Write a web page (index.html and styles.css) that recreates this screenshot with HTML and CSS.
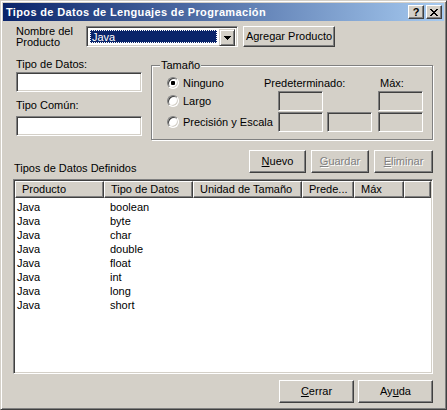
FILE: index.html
```html
<!DOCTYPE html>
<html>
<head>
<meta charset="utf-8">
<title>Tipos de Datos</title>
<link rel="stylesheet" href="styles.css">
</head>
<body>
<div class="window">
  <div class="titlebar">
    <span class="title">Tipos de Datos de Lenguajes de Programación</span>
    <div class="tbtns">
      <span class="tbtn help">?</span>
      <span class="tbtn close"><svg width="8" height="7" viewBox="0 0 8 7"><path d="M0 0h2v1H0zM6 0h2v1H6zM1 1h2v1H1zM5 1h2v1H5zM2 2h4v1H2zM3 3h2v1H3zM2 4h4v1H2zM1 5h2v1H1zM5 5h2v1H5zM0 6h2v1H0zM6 6h2v1H6z" fill="#000"/></svg></span>
    </div>
  </div>
  <div class="content">
    <div class="row1">
      <div class="lbl-prod">Nombre del<br>Producto</div>
      <div class="combo">
        <div class="combo-sel"><span>Java</span></div>
        <div class="combo-btn"><svg width="7" height="4" viewBox="0 0 7 4"><path d="M0 0h7v1H0zM1 1h5v1H1zM2 2h3v1H2zM3 3h1v1H3z" fill="#000"/></svg></div>
      </div>
      <button class="btn btn-add">Agregar Producto</button>
    </div>

    <div class="row2">
      <div class="leftcol">
        <div class="lbl">Tipo de Datos:</div>
        <div class="field f1"></div>
        <div class="lbl l2">Tipo Común:</div>
        <div class="field f2"></div>
      </div>
      <div class="group">
        <span class="legend">Tamaño</span>
        <div class="grow g0">
          <div class="radio-item r-short"><span class="radio checked"></span>Ninguno</div>
          <span class="cap-pred">Predeterminado:</span>
          <span class="cap-max">Máx:</span>
        </div>
        <div class="grow g1">
          <div class="radio-item"><span class="radio"></span>Largo</div>
          <div class="field dis"></div>
          <div class="spacer"></div>
          <div class="field dis"></div>
        </div>
        <div class="grow g2">
          <div class="radio-item"><span class="radio"></span>Precisión y Escala</div>
          <div class="field dis"></div>
          <div class="field dis gap4"></div>
          <div class="field dis gap6"></div>
        </div>
      </div>
    </div>

    <div class="row3">
      <div class="lbl-list">Tipos de Datos Definidos</div>
      <div class="btns">
        <button class="btn b-nuevo"><u>N</u>uevo</button>
        <button class="btn b-guardar disabled"><u>G</u>uardar</button>
        <button class="btn b-eliminar disabled"><u>E</u>liminar</button>
      </div>
    </div>

    <div class="list">
      <div class="lhead">
        <div class="hc c1">Producto</div>
        <div class="hc c2">Tipo de Datos</div>
        <div class="hc c3">Unidad de Tamaño</div>
        <div class="hc c4">Prede...</div>
        <div class="hc c5">Máx</div>
        <div class="hc cf"></div>
      </div>
      <div class="lrows">
        <div class="lrow"><span class="d1">Java</span><span class="d2">boolean</span></div>
        <div class="lrow"><span class="d1">Java</span><span class="d2">byte</span></div>
        <div class="lrow"><span class="d1">Java</span><span class="d2">char</span></div>
        <div class="lrow"><span class="d1">Java</span><span class="d2">double</span></div>
        <div class="lrow"><span class="d1">Java</span><span class="d2">float</span></div>
        <div class="lrow"><span class="d1">Java</span><span class="d2">int</span></div>
        <div class="lrow"><span class="d1">Java</span><span class="d2">long</span></div>
        <div class="lrow"><span class="d1">Java</span><span class="d2">short</span></div>
      </div>
    </div>

    <div class="row4">
      <button class="btn b-cerrar"><u>C</u>errar</button>
      <button class="btn b-ayuda">Ay<u>u</u>da</button>
    </div>
  </div>
</div>
</body>
</html>
```

FILE: styles.css
```css
* { box-sizing: border-box; }
html, body { margin: 0; padding: 0; }
body {
  width: 447px;
  height: 410px;
  overflow: hidden;
  background: #d4d0c8;
  font-family: "Liberation Sans", Arial, sans-serif;
  font-size: 11px;
  color: #000;
}
.window {
  width: 447px;
  height: 410px;
  background: #d4d0c8;
  border: 1px solid;
  border-color: #d4d0c8 #404040 #404040 #d4d0c8;
  box-shadow: inset 1px 1px #fff, inset -1px -1px #808080;
  padding: 2px;
  display: flex;
  flex-direction: column;
}
.titlebar {
  height: 18px;
  flex: none;
  background: linear-gradient(to right, #0a246a, #a6caf0);
  display: flex;
  align-items: center;
  justify-content: space-between;
  padding: 0 2px 0 3px;
}
.title {
  color: #fff;
  font-weight: bold;
  font-size: 11px;
  letter-spacing: 0.35px;
  line-height: 14px;
  white-space: nowrap;
}
.tbtns { display: flex; gap: 2px; }
.tbtn {
  width: 16px;
  height: 14px;
  background: #d4d0c8;
  border: 1px solid;
  border-color: #fff #404040 #404040 #fff;
  box-shadow: inset -1px -1px #808080;
  display: flex;
  align-items: center;
  justify-content: center;
  font-weight: bold;
  font-size: 11px;
  line-height: 12px;
}
.close svg { display: block; }

.content {
  padding: 0 11px 0 10px;
  display: flex;
  flex-direction: column;
}

/* generic controls */
.btn {
  font: inherit;
  color: #000;
  background: #d4d0c8;
  border: 1px solid;
  border-color: #fff #404040 #404040 #fff;
  box-shadow: inset -1px -1px #808080, inset 1px 1px #d4d0c8;
  padding: 0;
  margin: 0;
  height: 23px;
  display: flex;
  align-items: center;
  justify-content: center;
  line-height: 13px;
}
.btn.disabled { color: #808080; text-shadow: 1px 1px #fff; }
.field {
  height: 20px;
  background: #fff;
  border: 1px solid;
  border-color: #808080 #fff #fff #808080;
  box-shadow: inset 1px 1px #404040, inset -1px -1px #d4d0c8;
}
.field.dis { background: #d4d0c8; width: 45px; }

/* row 1 */
.row1 {
  margin-top: 5px;
  display: flex;
  align-items: flex-start;
}
.lbl-prod {
  margin-left: 3px;
  width: 70px;
  line-height: 11px;
}
.combo {
  width: 152px;
  height: 21px;
  background: #fff;
  border: 1px solid;
  border-color: #808080 #fff #fff #808080;
  box-shadow: inset 1px 1px #404040, inset -1px -1px #d4d0c8;
  padding: 2px;
  display: flex;
}
.combo-sel {
  flex: 1;
  margin: 1px 2px 1px 1px;
  background: #0a246a;
  color: #fff;
  outline: 1px dotted #fff;
  outline-offset: -1px;
  padding-left: 2px;
  line-height: 15px;
}
.combo-btn {
  width: 16px;
  height: 17px;
  background: #d4d0c8;
  border: 1px solid;
  border-color: #d4d0c8 #404040 #404040 #d4d0c8;
  box-shadow: inset 1px 1px #fff, inset -1px -1px #808080;
  display: flex;
  align-items: center;
  justify-content: center;
}
.combo-btn svg { display: block; }
.btn-add {
  margin-left: 5px;
  width: 92px;
  height: 21px;
}

/* row 2 */
.row2 {
  margin-top: 10px;
  display: flex;
  align-items: flex-start;
}
.leftcol {
  margin-left: 3px;
  width: 126px;
}
.lbl { line-height: 13px; height: 13px; }
.f1 { margin-top: 1px; }
.l2 { margin-top: 7px; }
.f2 { margin-top: 4px; }

.group {
  position: relative;
  margin-left: 9px;
  margin-top: 7px;
  width: 282px;
  height: 75px;
  border: 1px solid #808080;
  box-shadow: inset 1px 1px #fff, 1px 1px #fff;
  padding: 10px 0 0 14px;
}
.legend {
  position: absolute;
  top: -7px;
  left: 8px;
  padding: 0 1px;
  background: #d4d0c8;
  line-height: 13px;
}
.grow {
  display: flex;
  align-items: center;
}
.g0 { height: 14px; }
.g1, .g2 { height: 20px; margin-top: 1px; }
.radio-item {
  width: 112px;
  display: flex;
  align-items: center;
  padding-left: 1px;
  white-space: nowrap;
}
.radio-item.r-short { width: 98px; }
.radio {
  position: relative;
  width: 12px;
  height: 12px;
  flex: none;
  margin-right: 4px;
  border-radius: 50%;
  background: #fff;
  border: 1px solid;
  border-color: #808080 #fff #fff #808080;
  box-shadow: inset 1px 1px #404040, inset -1px -1px #d4d0c8;
}
.radio.checked::after {
  content: "";
  position: absolute;
  left: 3px;
  top: 3px;
  width: 4px;
  height: 4px;
  border-radius: 1px;
  background: #000;
}
.cap-pred { width: 114px; white-space: nowrap; }
.cap-max { margin-left: 2px; }
.spacer { width: 55px; }
.gap4 { margin-left: 4px; }
.gap6 { margin-left: 6px; }

/* row 3 */
.row3 {
  margin-top: 10px;
  height: 23px;
  display: flex;
  justify-content: space-between;
  align-items: flex-start;
}
.lbl-list {
  margin-left: 1px;
  margin-top: 12px;
  line-height: 13px;
}
.btns { display: flex; }
.b-nuevo { width: 57px; }
.b-guardar { width: 58px; margin-left: 5px; }
.b-eliminar { width: 59px; margin-left: 5px; }

/* list */
.list {
  margin-top: 6px;
  height: 195px;
  background: #fff;
  border: 1px solid;
  border-color: #808080 #fff #fff #808080;
  box-shadow: inset 1px 1px #404040, inset -1px -1px #d4d0c8;
  padding: 1px;
  display: flex;
  flex-direction: column;
}
.lhead {
  display: flex;
  height: 17px;
  flex: none;
}
.hc {
  height: 17px;
  background: #d4d0c8;
  border: 1px solid;
  border-color: #fff #404040 #404040 #fff;
  box-shadow: inset -1px -1px #808080;
  padding-left: 6px;
  line-height: 14px;
  white-space: nowrap;
  overflow: hidden;
}
.c1 { width: 89px; }
.c2 { width: 89px; }
.c3 { width: 109px; }
.c4 { width: 52px; }
.c5 { width: 50px; }
.cf { flex: 1; }
.lrows { margin-top: 2px; }
.lrow {
  display: flex;
  height: 14px;
  line-height: 14px;
}
.d1 { width: 89px; padding-left: 2px; }
.d2 { padding-left: 6px; }

/* row 4 */
.row4 {
  margin-top: 6px;
  display: flex;
  justify-content: flex-end;
}
.b-cerrar { width: 75px; }
.b-ayuda { width: 75px; margin-left: 4px; }
```
